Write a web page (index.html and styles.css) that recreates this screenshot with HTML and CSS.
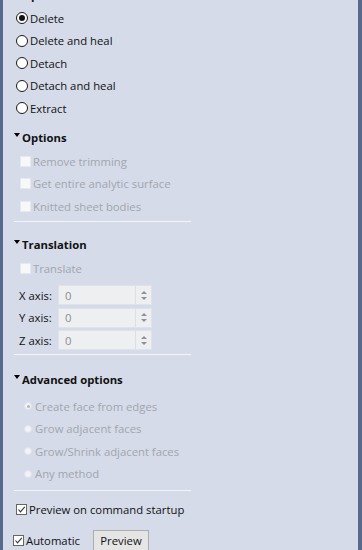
FILE: index.html
```html
<!DOCTYPE html>
<html lang="en">
<head>
    <meta charset="UTF-8">
    <title>Delete Face - Command Panel</title>
    <link rel="stylesheet" href="styles.css">
</head>
<body>
    <div class="panel">
        <div class="content">
            <div class="section-head"><span class="tri"></span>Operations</div>
            <div class="list radios">
                <label class="row"><span class="radio on"></span>Delete</label>
                <label class="row"><span class="radio"></span>Delete and heal</label>
                <label class="row"><span class="radio"></span>Detach</label>
                <label class="row"><span class="radio"></span>Detach and heal</label>
                <label class="row"><span class="radio"></span>Extract</label>
            </div>

            <div class="section-head options-head"><span class="tri"></span>Options</div>
            <div class="list checks">
                <label class="row disabled"><span class="check"></span>Remove trimming</label>
                <label class="row disabled"><span class="check"></span>Get entire analytic surface</label>
                <label class="row disabled"><span class="check"></span>Knitted sheet bodies</label>
            </div>
            <div class="sep sep-1"></div>

            <div class="section-head trans-head"><span class="tri"></span>Translation</div>
            <div class="list checks">
                <label class="row disabled"><span class="check"></span>Translate</label>
            </div>
            <div class="list axes">
                <div class="row axis-row">
                    <span class="axis-label">X axis:</span>
                    <div class="spin"><span class="spin-val">0</span><span class="spin-btns"><i class="up"></i><i class="down"></i></span></div>
                </div>
                <div class="row axis-row">
                    <span class="axis-label">Y axis:</span>
                    <div class="spin"><span class="spin-val">0</span><span class="spin-btns"><i class="up"></i><i class="down"></i></span></div>
                </div>
                <div class="row axis-row">
                    <span class="axis-label">Z axis:</span>
                    <div class="spin"><span class="spin-val">0</span><span class="spin-btns"><i class="up"></i><i class="down"></i></span></div>
                </div>
            </div>
            <div class="sep sep-2"></div>

            <div class="section-head adv-head"><span class="tri"></span>Advanced options</div>
            <div class="list adv">
                <label class="row disabled"><span class="radio-dis on"></span>Create face from edges</label>
                <label class="row disabled"><span class="radio-dis"></span>Grow adjacent faces</label>
                <label class="row disabled"><span class="radio-dis"></span>Grow/Shrink adjacent faces</label>
                <label class="row disabled"><span class="radio-dis"></span>Any method</label>
            </div>
            <div class="sep sep-3"></div>

            <label class="row startup-row">
                <span class="check on">
                    <svg width="9" height="9" viewBox="0 0 9 9"><polyline points="1.5,4.5 3.5,6.8 7.8,1.8" fill="none" stroke="#333" stroke-width="1.1"/></svg>
                </span>Preview on command startup
            </label>

            <div class="row footer-row">
                <label class="auto">
                    <span class="check on">
                        <svg width="9" height="9" viewBox="0 0 9 9"><polyline points="1.5,4.5 3.5,6.8 7.8,1.8" fill="none" stroke="#333" stroke-width="1.1"/></svg>
                    </span>Automatic
                </label>
                <button class="btn">Preview</button>
            </div>
        </div>
    </div>
</body>
</html>
```

FILE: styles.css
```css
:root {
    --panel-bg: #d5dbe9;
    --frame: #57698c;
    --text: #111;
    --muted: #a2a6af;
}

* {
    margin: 0;
    padding: 0;
    box-sizing: border-box;
}

html, body {
    width: 362px;
    height: 550px;
    overflow: hidden;
}

body {
    font-family: "Open Sans", "Noto Sans", sans-serif;
    font-size: 11.3px;
    color: var(--text);
    background: var(--panel-bg);
}

.panel {
    height: 550px;
    background: var(--panel-bg);
    border-left: 3px solid var(--frame);
    border-right: 4px solid var(--frame);
    overflow: hidden;
}

.content {
    margin-top: -17px;
    width: 200px;
}

.row {
    display: flex;
    align-items: center;
    height: 22.5px;
    white-space: nowrap;
}

.disabled {
    color: var(--muted);
}

/* collapsible headers */
.section-head {
    display: flex;
    align-items: center;
    height: 22px;
    padding-left: 11px;
    font-weight: bold;
}

.tri {
    width: 0;
    height: 0;
    margin-right: 2px;
    border-left: 3.5px solid transparent;
    border-right: 3.5px solid transparent;
    border-top: 4px solid #000;
    position: relative;
    top: -2px;
}

.options-head { margin-top: 6.5px; }
.trans-head { margin-top: 11px; }
.adv-head { margin-top: 13px; }

.list { margin-top: 2px; }
.axes { margin-top: 4.5px; }
.adv { margin-top: 5px; }

/* radio buttons */
.radios .row { padding-left: 13px; }

.radio {
    width: 12px;
    height: 12px;
    margin-right: 2px;
    border: 1px solid #1a1a1a;
    border-radius: 50%;
    background: #fff;
    display: flex;
    align-items: center;
    justify-content: center;
}

.radio.on::after {
    content: "";
    width: 6px;
    height: 6px;
    border-radius: 50%;
    background: #111;
}

.adv .row { padding-left: 21px; }

.radio-dis {
    width: 8px;
    height: 8px;
    margin-right: 3px;
    border-radius: 50%;
    background: #f1f3f7;
    border: 1px solid #e0e3ea;
    display: flex;
    align-items: center;
    justify-content: center;
}

.radio-dis.on::after {
    content: "";
    width: 3px;
    height: 3px;
    border-radius: 50%;
    background: #b3b7bf;
}

/* checkboxes */
.checks .row { padding-left: 17px; }

.check {
    width: 11px;
    height: 11px;
    margin-right: 2px;
    background: #f7f8fa;
    border: 1px solid #e6e8ee;
    display: flex;
    align-items: center;
    justify-content: center;
}

.check.on {
    background: #fff;
    border: 1px solid #666;
}

.sep {
    height: 1px;
    margin-left: 11px;
    width: 177px;
    background: #f2f4f9;
}

.sep-1 { margin-top: 3.5px; }
.sep-2 { margin-top: 2.5px; }
.sep-3 { margin-top: 5px; }

/* spin inputs */
.axis-row { padding-left: 16px; }

.axis-label {
    width: 39px;
}

.spin {
    display: flex;
    align-items: center;
    width: 94px;
    height: 20px;
    background: #eeeff1;
    border: 1px solid #dfe2e8;
}

.spin-val {
    flex: 1;
    padding-left: 6px;
    color: #8a8d93;
}

.spin-btns {
    width: 16px;
    height: 18px;
    border-left: 1px solid #dcdfe4;
    display: flex;
    flex-direction: column;
    align-items: center;
    justify-content: center;
    gap: 3px;
}

.spin-btns i {
    display: block;
    width: 0;
    height: 0;
    border-left: 3px solid transparent;
    border-right: 3px solid transparent;
}

.spin-btns .up { border-bottom: 3px solid #8f9299; }
.spin-btns .down { border-top: 3px solid #8f9299; }

/* bottom */
.startup-row {
    margin-top: 7px;
    height: 22px;
    padding-left: 13px;
}

.footer-row {
    margin-top: 9px;
    height: 22px;
    padding-left: 10px;
}

.auto {
    display: flex;
    align-items: center;
    width: 80px;
}

.btn {
    font-family: inherit;
    font-size: 11.3px;
    color: var(--text);
    width: 56px;
    height: 21px;
    margin-top: 1px;
    background: #e5e5e5;
    border: 1px solid #adadad;
}
```
